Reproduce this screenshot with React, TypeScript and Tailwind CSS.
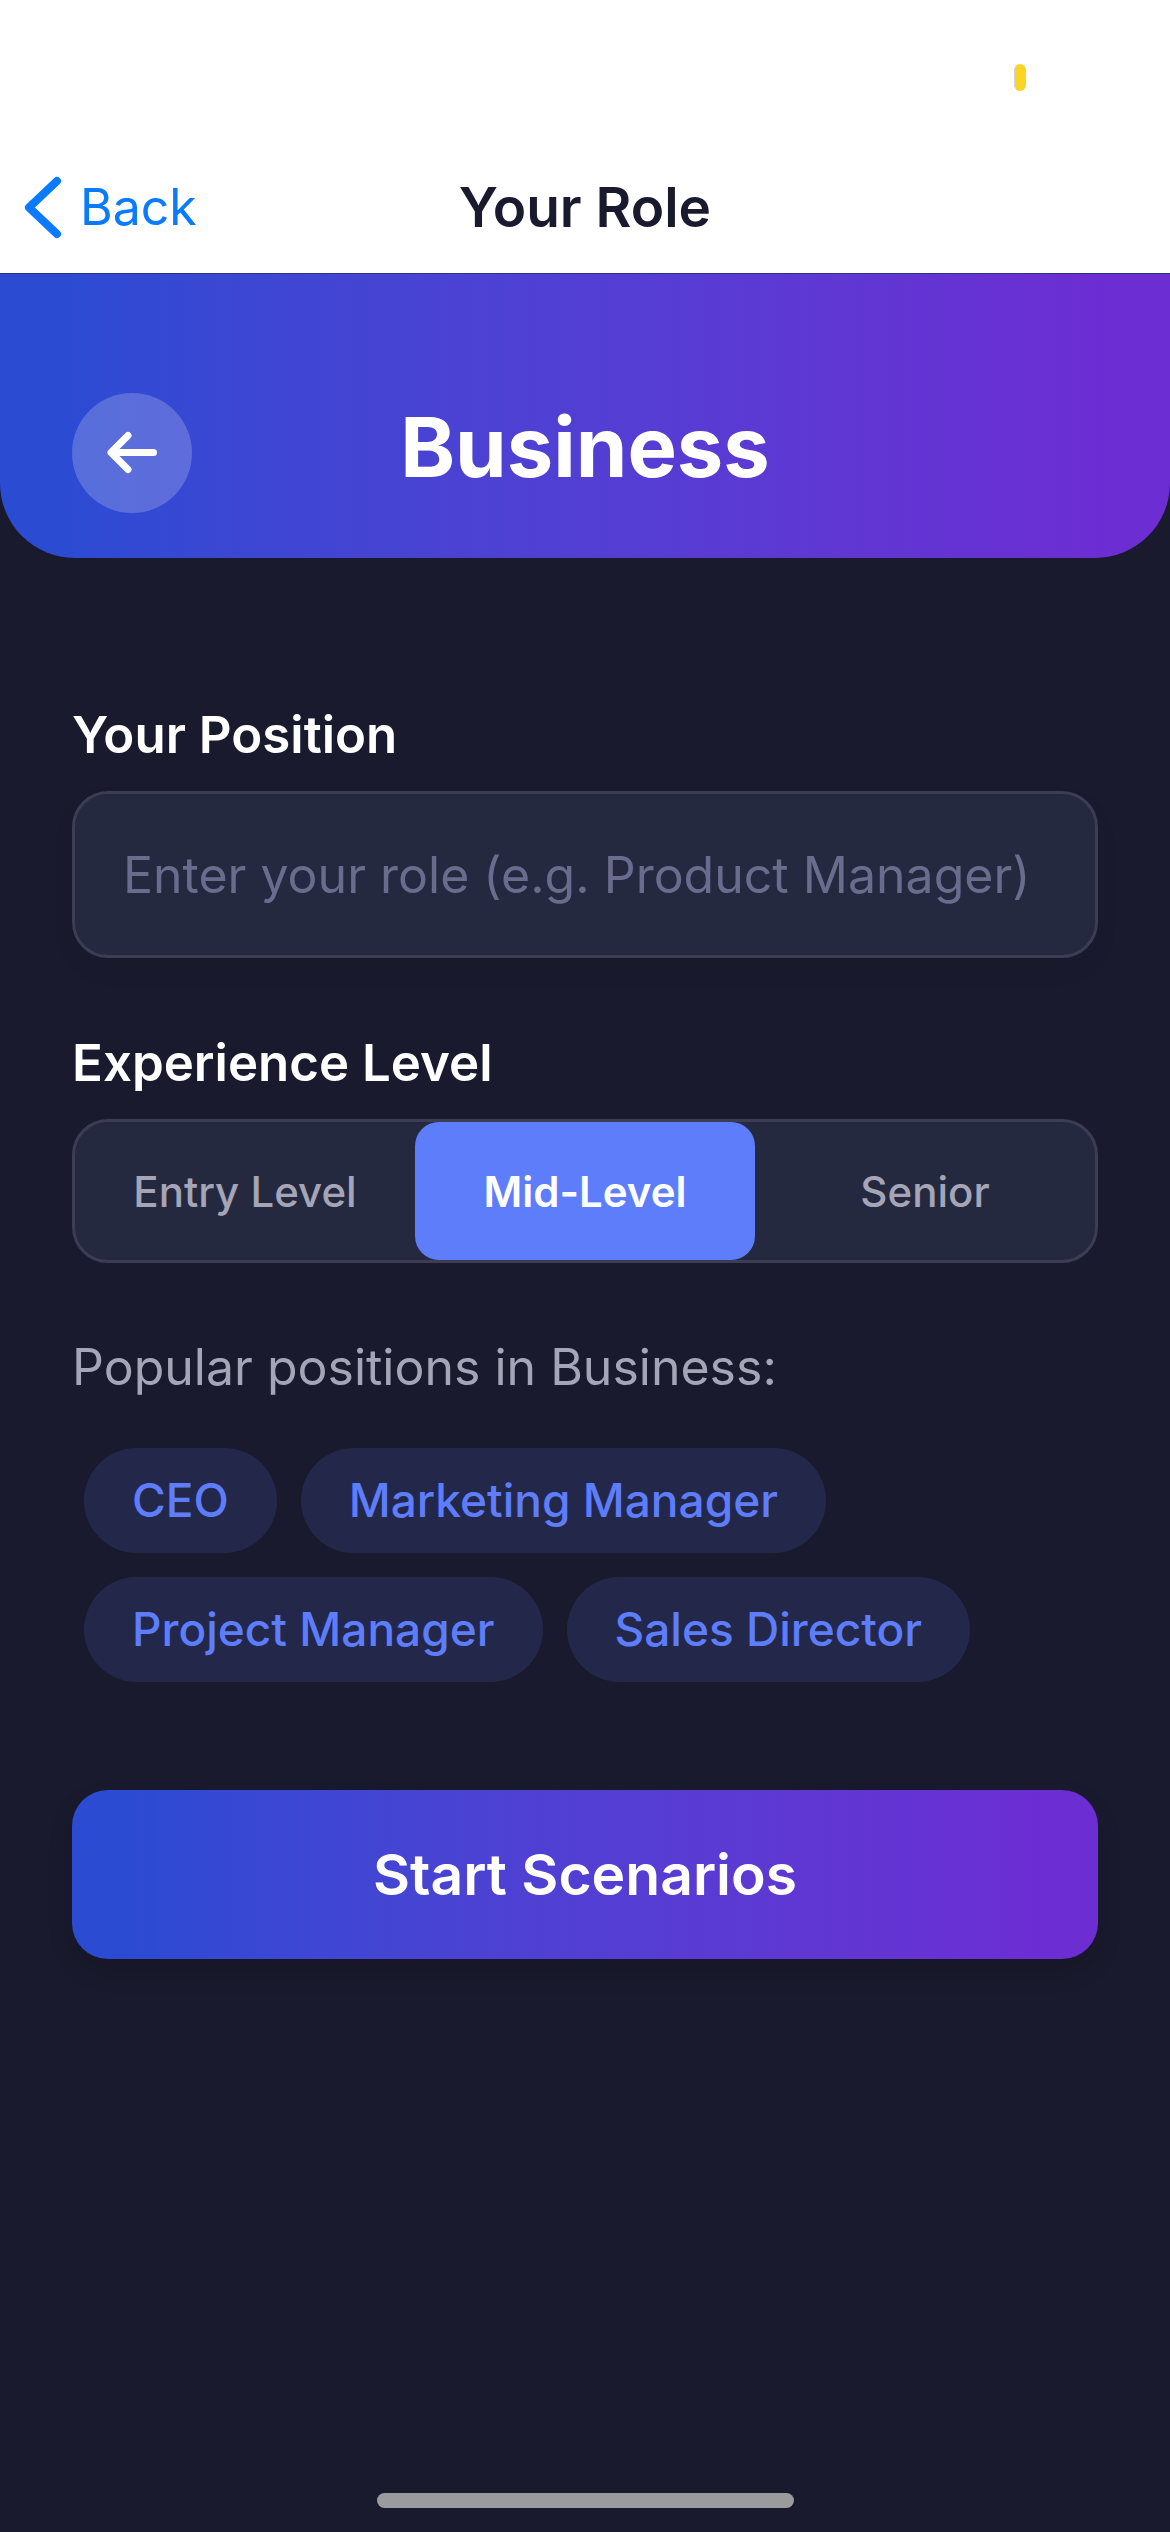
import { useState } from "react";

const levels = ["Entry Level", "Mid-Level", "Senior"];
const positions = ["CEO", "Marketing Manager", "Project Manager", "Sales Director"];

export default function App() {
  const [role, setRole] = useState("");
  const [level, setLevel] = useState("Mid-Level");

  return (
    <div className="flex min-h-screen flex-col bg-[#1a1a2e] font-['Inter','Liberation_Sans',sans-serif] text-white">
      <header className="border-b border-[#2d3180] bg-white">
        {/* status bar */}
        <div className="flex h-[141px] items-start justify-end pt-16 pr-36">
          <div className="h-[27px] w-3 rounded-full border-l border-gray-300 bg-[#fad622]" />
        </div>

        <div className="grid h-[132px] grid-cols-[1fr_auto_1fr] items-start px-6 pt-8">
          <a href="#back" className="flex items-center gap-4 text-[50px] leading-[68px] text-[#0a7aff]">
            <svg className="h-16 w-10" viewBox="0 0 40 64" fill="none" stroke="currentColor" strokeWidth="8" strokeLinecap="round" strokeLinejoin="round">
              <path d="M33 6 L5 32.500 L33 59" />
            </svg>
            Back
          </a>
          <h2 className="text-[55px] leading-[68px] font-semibold text-[#1a1a2e]">Your Role</h2>
        </div>
      </header>

      <section className="grid grid-cols-[120px_1fr_120px] items-center rounded-b-[75px] bg-linear-to-r from-[#2b4bd3] from-5% to-[#6c2dd3] to-95% px-[72px] pt-[119px] pb-[45px]">
        <button aria-label="Go back" className="flex size-[120px] items-center justify-center rounded-full bg-white/20">
          <svg className="size-[72px]" viewBox="0 0 72 72" fill="none" stroke="white" strokeWidth="7" strokeLinecap="round" strokeLinejoin="round">
            <path d="M32 18.500 L15 35.500 L32 52.500 M16 35.500 H57.500" />
          </svg>
        </button>
        <h1 className="pb-3 text-center text-[83px] leading-[100px] font-bold">Business</h1>
      </section>

      <main className="flex flex-col px-[72px] pt-[144px]">
        <label htmlFor="role" className="text-[51px] leading-[65px] font-semibold">
          Your Position
        </label>
        <input
          id="role"
          type="text"
          value={role}
          onChange={(e) => setRole(e.target.value)}
          placeholder="Enter your role (e.g. Product Manager)"
          className="mt-6 h-[167px] w-full rounded-[36px] border-3 border-[#3c3c54] bg-[#25293f] px-12 text-[50px] shadow-[0_12px_24px_rgba(0,0,0,0.05)] outline-none placeholder:text-[#6b6b8d]"
        />

        <h3 id="level" className="mt-[72px] text-[51px] leading-[65px] font-semibold">
          Experience Level
        </h3>
        <div role="group" aria-labelledby="level" className="mt-6 grid h-[144px] grid-cols-3 rounded-[36px] border-3 border-[#3c3c54] bg-[#25293f]">
          {levels.map((item) => (
            <button
              key={item}
              aria-pressed={item === level}
              onClick={() => setLevel(item)}
              className={
                item === level
                  ? "rounded-3xl bg-[#5e7dfb] text-[42px] font-semibold text-white"
                  : "rounded-3xl text-[42px] font-medium text-[#a5a5b8]"
              }
            >
              {item}
            </button>
          ))}
        </div>

        <p className="mt-[72px] text-[50px] leading-[65px] text-[#a5a5b8]">Popular positions in Business:</p>
        <div className="mt-12 flex flex-wrap gap-6 px-3">
          {positions.map((item) => (
            <button
              key={item}
              onClick={() => setRole(item)}
              className="h-[105px] rounded-full bg-[#23284b] px-12 text-[46px] font-medium text-[#5e7dfb]"
            >
              {item}
            </button>
          ))}
        </div>

        <button className="mt-[108px] h-[169px] rounded-[36px] bg-linear-to-r from-[#2b4bd3] from-5% to-[#6c2dd3] to-95% text-[57px] font-semibold shadow-[0_12px_24px_rgba(0,0,0,0.15)]">
          Start Scenarios
        </button>
      </main>

      {/* home indicator */}
      <div className="mx-auto mt-auto mb-6 h-[15px] w-[417px] rounded-full bg-[#9b9b9d]" />
    </div>
  );
}
